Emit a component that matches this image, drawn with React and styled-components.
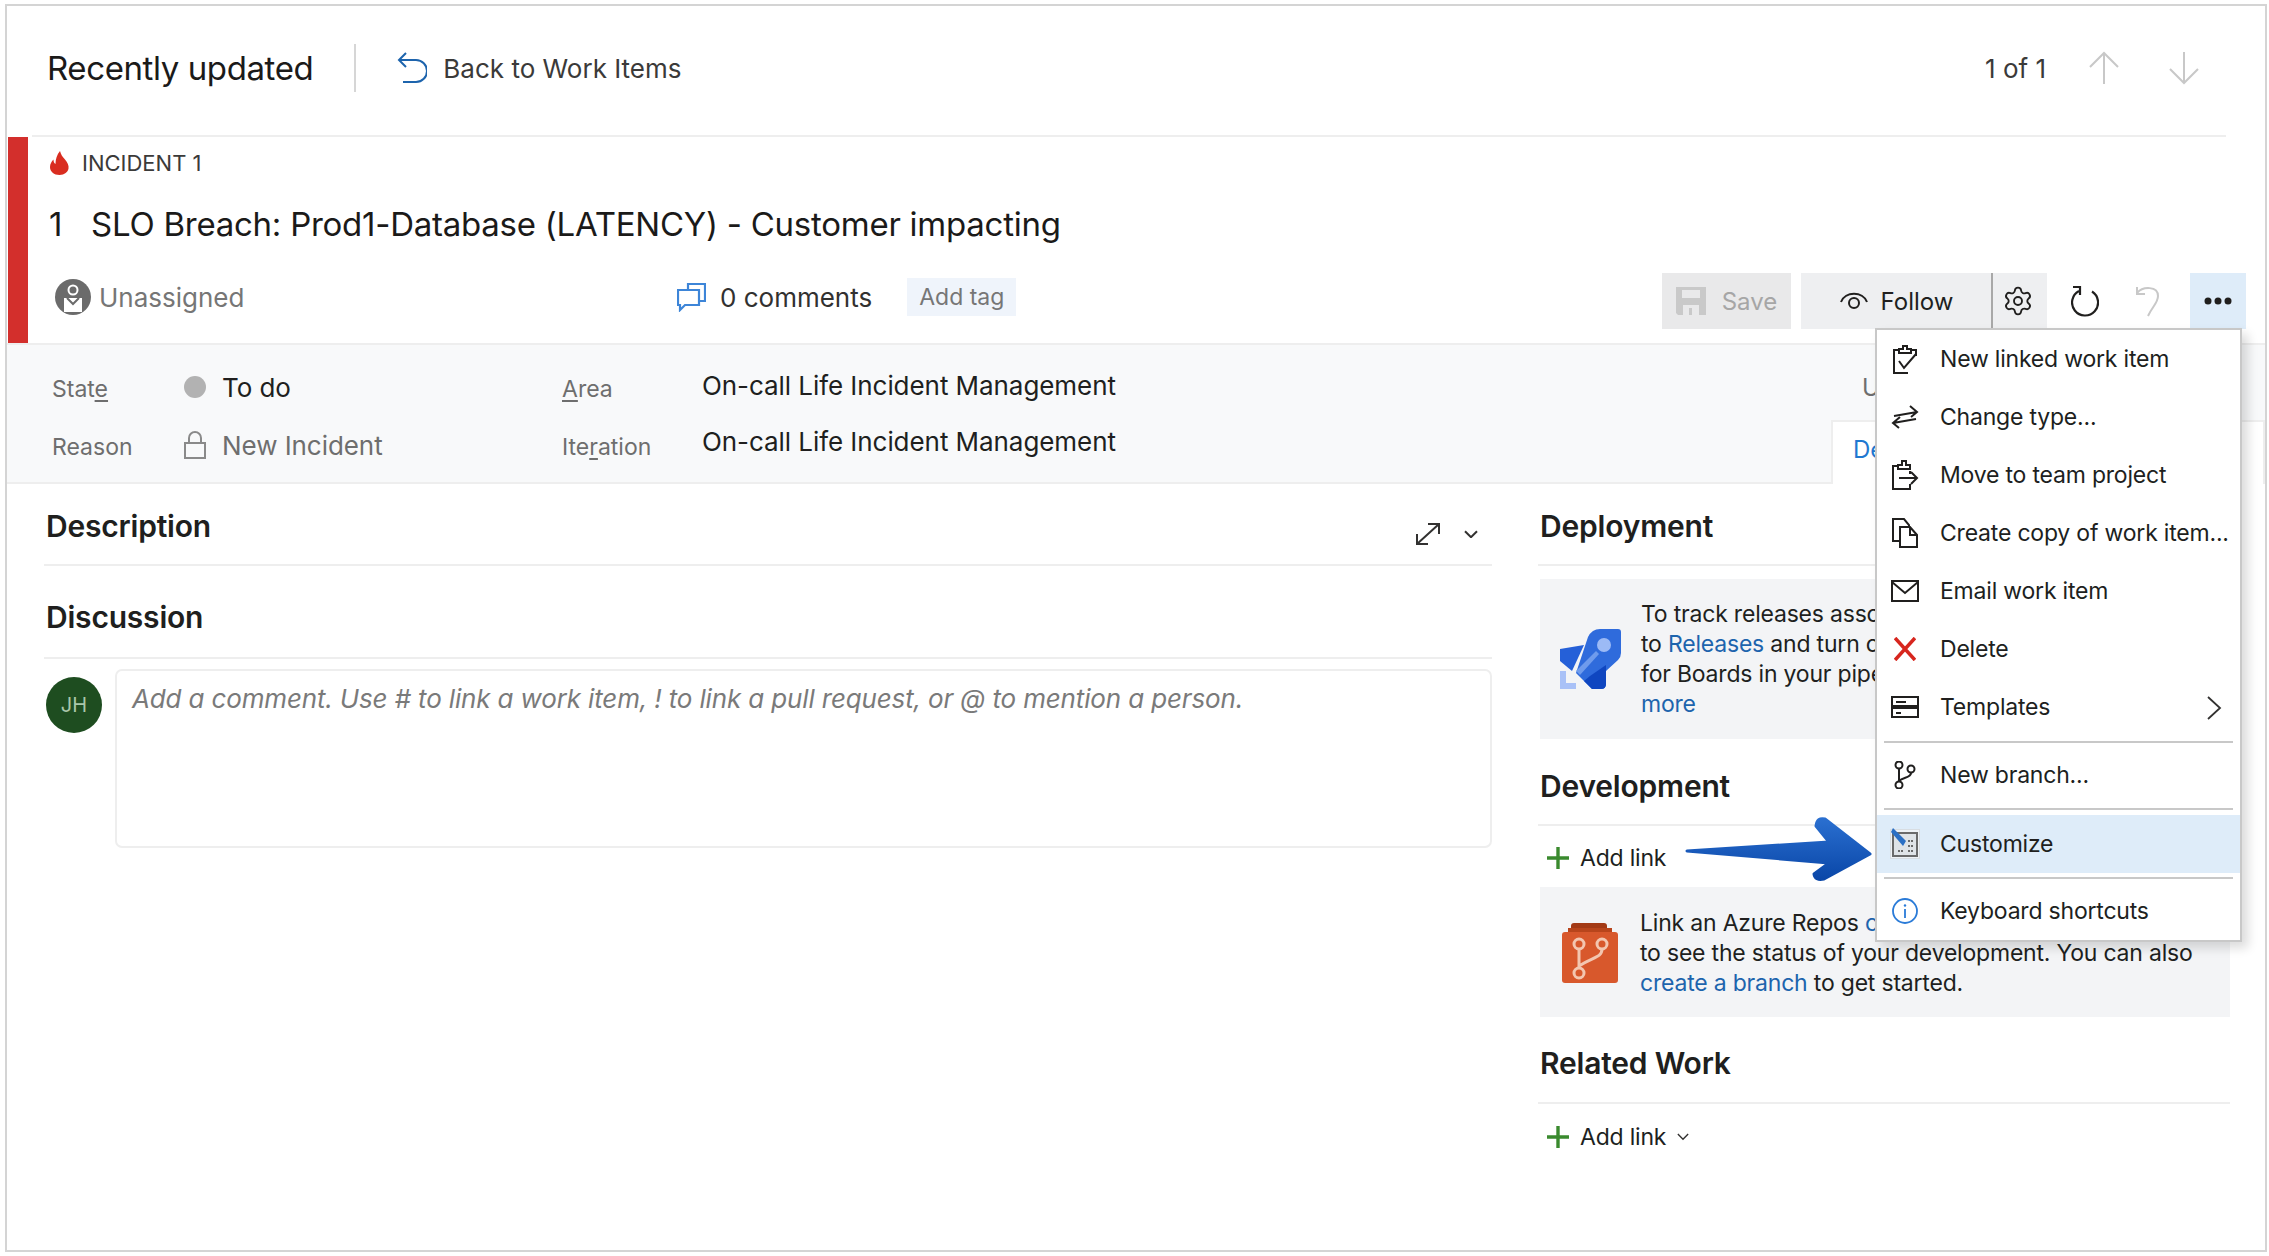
import React from "react";
import styled, { createGlobalStyle } from "styled-components";
import { Settings } from "lucide-react";

const GlobalStyle = createGlobalStyle`
  html, body {
    margin: 0;
    background: #fff;
  }
  * {
    box-sizing: border-box;
  }
`;

const Frame = styled.div`
  position: relative;
  width: 2262px;
  height: 1248px;
  margin: 4px 0 0 5px;
  border: 2px solid #d4d4d4;
  background: #fff;
  font-family: Inter, "Liberation Sans", sans-serif;
  color: #201f1e;
  overflow: hidden;
`;

const Header = styled.div`
  display: flex;
  align-items: center;
  height: 131px;
  margin: 0 39px 0 25px;
  padding: 0 26px 5px 15px;
  border-bottom: 2px solid #eeeeee;
`;

const HeaderTitle = styled.div`
  font-size: 33px;
  letter-spacing: -0.4px;
  color: #1b1a19;
`;

const VDivider = styled.div`
  width: 2px;
  height: 48px;
  margin: 0 41px;
  background: #d6d6d6;
`;

const BackLink = styled.div`
  display: flex;
  align-items: center;
  gap: 16px;
  font-size: 26px;
  color: #3b3a39;
`;

const Pager = styled.div`
  display: flex;
  align-items: center;
  margin-left: auto;
  font-size: 26px;
  color: #3b3a39;
`;

const PagerArrow = styled.svg`
  width: 32px;
  height: 34px;
  margin-left: ${(p) => p.$gap}px;
  fill: none;
  stroke: #c8c8c8;
  stroke-width: 2;
`;

const Incident = styled.section`
  height: 206px;
  margin-left: 1px;
  border-left: 20px solid #d32f2c;
  padding: 0 19px 14px 21px;
`;

const TypeRow = styled.div`
  display: flex;
  align-items: center;
  gap: 13px;
  height: 52px;
  padding-left: 1px;
  font-size: 22px;
  color: #3b3a39;
`;

const TitleRow = styled.div`
  display: flex;
  align-items: center;
  height: 70px;
  margin-bottom: 14px;
  font-size: 33px;
  letter-spacing: -0.25px;
  color: #1b1a19;
`;

const TitleId = styled.span`
  width: 42px;
`;

const MetaRow = styled.div`
  display: flex;
  align-items: center;
  height: 56px;
`;

const Meta = styled.div`
  display: flex;
  align-items: center;
  padding-bottom: 8px;
`;

const Assignee = styled(Meta)`
  width: 622px;
  margin-left: 6px;
  gap: 8px;
  font-size: 26px;
  color: #767676;
`;

const Comments = styled(Meta)`
  gap: 14px;
  font-size: 26px;
  color: #323130;
`;

const Tag = styled.div`
  display: flex;
  align-items: center;
  height: 38px;
  margin-left: 35px;
  padding: 0 12px;
  background: #eff4fb;
  font-size: 23px;
  color: #767676;
`;

const Toolbar = styled.div`
  display: flex;
  align-items: stretch;
  height: 56px;
  margin-left: auto;
`;

const ToolButton = styled.div`
  display: flex;
  align-items: center;
  justify-content: center;
  gap: ${(p) => p.$gap || 0}px;
  width: ${(p) => p.$w}px;
  margin-left: ${(p) => p.$ml || 0}px;
  background: ${(p) => p.$bg || "transparent"};
  border-right: ${(p) => (p.$split ? "2px solid #a8a8a8" : "0")};
  font-size: 24px;
  color: ${(p) => p.$color || "#201f1e"};
`;

const GearIcon = styled(Settings)`
  margin-right: 4px;
`;

const DetailsBar = styled.section`
  display: flex;
  height: 141px;
  background: #f8f9fa;
  border-top: 2px solid #eeeeee;
  border-bottom: 2px solid #eeeeee;
`;

const FieldGrid = styled.div`
  display: grid;
  grid-template-columns: 132px 378px 140px 1fr;
  grid-template-rows: 58px 58px;
  align-items: center;
  padding: 13px 0 0 45px;
`;

const FieldLabel = styled.div`
  font-size: 23px;
  color: #6e6e6e;
  padding-top: 3px;
  u {
    text-underline-offset: 3px;
  }
`;

const FieldValue = styled.div`
  display: flex;
  align-items: center;
  gap: 16px;
  font-size: 26px;
  letter-spacing: -0.06px;
  color: ${(p) => (p.$muted ? "#6e6e6e" : "#201f1e")};
  margin-top: ${(p) => p.$up || 0}px;
`;

const StateDot = styled.span`
  width: 22px;
  height: 22px;
  border-radius: 50%;
  background: #b2b2b2;
`;

const TabSide = styled.div`
  display: flex;
  flex-direction: column;
  justify-content: space-between;
  width: 434px;
  margin-left: auto;
`;

const Updated = styled.div`
  margin: 28px 0 0 31px;
  font-size: 24px;
  color: #6e6e6e;
`;

const Tab = styled.div`
  height: 64px;
  margin-bottom: -2px;
  padding: 13px 0 0 20px;
  background: #fff;
  border: 2px solid #eeeeee;
  border-bottom: 0;
  font-size: 24px;
  color: #1f78d1;
`;

const Body = styled.div`
  display: grid;
  grid-template-columns: 1448px 692px;
  column-gap: 46px;
  padding: 0 35px 0 37px;
`;

const Column = styled.div`
  display: flex;
  flex-direction: column;
`;

const SectionHead = styled.div`
  display: flex;
  align-items: center;
  height: 40px;
  box-sizing: content-box;
  margin-top: ${(p) => p.$top}px;
  padding: 0 0 ${(p) => p.$bottom}px 2px;
  border-bottom: 2px solid #eeeeee;
  font-size: 30px;
  font-weight: 600;
  letter-spacing: -0.2px;
  color: #201f1e;
`;

const HeadTools = styled.div`
  display: flex;
  align-items: center;
  gap: 22px;
  margin: 16px 14px 0 auto;
`;

const CommentRow = styled.div`
  display: flex;
  align-items: flex-start;
  gap: 13px;
  margin-top: 10px;
  padding-left: 2px;
`;

const Avatar = styled.div`
  display: flex;
  align-items: center;
  justify-content: center;
  width: 56px;
  height: 56px;
  margin-top: 8px;
  border-radius: 50%;
  background: #1e4d20;
  font-size: 20px;
  color: #a9c6aa;
`;

const CommentBox = styled.div`
  flex: 1;
  height: 179px;
  padding: 12px 15px;
  border: 2px solid #eeeeee;
  border-radius: 7px;
  font-size: 26px;
  font-style: italic;
  letter-spacing: -0.15px;
  color: #7a7a7a;
`;

const InfoBox = styled.div`
  display: flex;
  align-items: center;
  gap: ${(p) => p.$gap}px;
  height: ${(p) => p.$h}px;
  margin: ${(p) => p.$top || 0}px 0 0 2px;
  padding-left: ${(p) => p.$left}px;
  padding-top: ${(p) => p.$pt || 0}px;
  background: #f3f4f6;
  font-size: 23px;
  letter-spacing: -0.2px;
  line-height: 30px;
  white-space: nowrap;
  color: #201f1e;
  overflow: hidden;
`;

const InfoLink = styled.span`
  color: #1d64ad;
`;

const AddLink = styled.div`
  display: flex;
  align-items: center;
  gap: 11px;
  height: ${(p) => p.$h}px;
  padding: ${(p) => p.$pt || 0}px 0 0 9px;
  font-size: 23px;
  letter-spacing: -0.2px;
  color: #201f1e;
`;

const Menu = styled.div`
  position: absolute;
  top: 322px;
  right: 23px;
  width: 367px;
  border: 2px solid #c8c8c8;
  background: #fff;
  box-shadow: 6px 6px 10px rgba(0, 0, 0, 0.14);
  font-size: 23px;
  letter-spacing: -0.2px;
  color: #201f1e;
`;

const MenuItem = styled.div`
  display: flex;
  align-items: center;
  height: ${(p) => p.$h || 58}px;
  padding-left: 13px;
  white-space: nowrap;
  background: ${(p) => (p.$active ? "#deecf9" : "transparent")};
`;

const MenuIcon = styled.div`
  display: flex;
  align-items: center;
  justify-content: center;
  flex: none;
  width: 30px;
  height: 32px;
  margin-right: 20px;
`;

const MenuChevron = styled.svg`
  width: 16px;
  height: 24px;
  margin: 2px 18px 0 auto;
  fill: none;
  stroke: #323130;
  stroke-width: 1.8;
`;

const MenuSep = styled.div`
  height: 2px;
  margin: ${(p) => p.$top}px 7px ${(p) => p.$bottom}px;
  background: #c8c8c8;
`;

const Pointer = styled.svg`
  position: absolute;
  left: 1677px;
  top: 808px;
  width: 192px;
  height: 68px;
`;

const Ic = styled.svg`
  flex: none;
  fill: none;
  stroke: ${(p) => p.$c || "#201f1e"};
  stroke-width: ${(p) => p.$sw || 2};
`;

const FlameIcon = () => (
  <svg width="19" height="24" viewBox="0 0 19 24">
    <path
      fill="#d92d20"
      d="M10 0c1 4 2.500 5.500 5 8.500 2.500 3 4 6 3.500 9C18 21 14.500 24 9.500 24 4 24 0 20.500 0 16c0-3 1.500-5.500 3.500-7.500 0 2 .5 3.500 2 4.500C5.500 8 7 3.500 10 0z"
    />
  </svg>
);

const BackIcon = () => (
  <Ic $c="#1d64ad" width="30" height="32" viewBox="0 0 30 32">
    <path d="M2 8h17a8.500 8.500 0 0 1 0 22H6" />
    <path d="M9 1L2 8l7 7" />
  </Ic>
);

const PersonIcon = () => (
  <svg width="36" height="36" viewBox="0 0 36 36">
    <circle cx="18" cy="18" r="18" fill="#6b6b6b" />
    <circle cx="18" cy="11" r="4.500" fill="none" stroke="#fff" strokeWidth="2" />
    <path d="M9 33V19h18v14" fill="#fff" />
    <path d="M12 19l6 6 6-6" fill="none" stroke="#6b6b6b" strokeWidth="2" />
  </svg>
);

const CommentIcon = () => (
  <Ic $c="#3d85d8" $sw={2.2} width="29" height="29" viewBox="0 0 29 29">
    <path d="M11 7V1h17v17h-6" />
    <path d="M1 7h21v15H8l-5 5v-5H1z" />
  </Ic>
);

const SaveIcon = () => (
  <svg width="30" height="28" viewBox="0 0 30 28">
    <path
      fill="#c9c9c9"
      d="M0 0h30v28H23V18H7v10H2L0 26zM6 3v8h18V3zM13 21h3v7h-3z"
      fillRule="evenodd"
    />
  </svg>
);

const EyeIcon = () => (
  <Ic $sw={2} width="30" height="24" viewBox="0 0 30 24">
    <path d="M2 13C6 2 24 2 28 13" />
    <circle cx="15" cy="14" r="5" />
  </Ic>
);

const RefreshIcon = () => (
  <Ic $sw={2.2} width="28" height="32" viewBox="0 0 28 32">
    <path d="M8 6A13 13 0 1 0 21 6.500" />
    <path d="M2 2h7v8" />
  </Ic>
);

const UndoIcon = () => (
  <Ic $c="#c8c8c8" width="26" height="32" viewBox="0 0 26 32">
    <path d="M2 8C8 1 23 1 23 11c0 7-6 11-10 20" />
    <path d="M2 2v7h8" />
  </Ic>
);

const DotsIcon = () => (
  <svg width="28" height="8" viewBox="0 0 28 8">
    <circle cx="4" cy="4" r="3.500" fill="#201f1e" />
    <circle cx="14" cy="4" r="3.500" fill="#201f1e" />
    <circle cx="24" cy="4" r="3.500" fill="#201f1e" />
  </svg>
);

const LockIcon = () => (
  <Ic $c="#8a8a8a" width="22" height="28" viewBox="0 0 22 28">
    <rect x="1" y="12" width="20" height="15" />
    <path d="M5 12V7a6 6 0 0 1 12 0v5" />
  </Ic>
);

const ExpandIcon = () => (
  <Ic $c="#323130" width="28" height="26" viewBox="0 0 28 26">
    <path d="M3 23L25 3M14 3h11v10M3 13v10h11" />
  </Ic>
);

const SmallChevron = ({ w = 14, sw = 2 }) => (
  <Ic $c="#323130" $sw={sw} width={w} height={w * 0.6} viewBox="0 0 14 8">
    <path d="M1 1l6 6 6-6" />
  </Ic>
);

const PlusIcon = () => (
  <Ic $c="#3a8a2e" $sw={3.4} width="22" height="22" viewBox="0 0 22 22">
    <path d="M11 0v22M0 11h22" />
  </Ic>
);

const RocketIcon = () => (
  <svg width="61" height="60" viewBox="0 0 61 60">
    <path fill="#2560d8" d="M0 20l24-4-12 26L0 32z" />
    <path
      fill="#2f6bdc"
      d="M28 8Q32 0 40 0h18q3 0 3 3v21q0 4-3 7L46 42v13q0 5-5 5h-9L16 44z"
    />
    <path fill="#0f46c0" d="M30 47l16-11v19q0 5-5 5h-9l-8-8z" />
    <circle cx="44" cy="16" r="7" fill="#9cbaf5" />
    <path fill="#6f9bec" d="M16 42l20-20 3 3-19 21z" />
    <path fill="#a9c1f7" d="M0 42h6v12h10v6H0z" />
  </svg>
);

const RepoIcon = () => (
  <svg width="56" height="60" viewBox="0 0 56 60">
    <path fill="#a33a16" d="M12 0h30q3 0 3 3v4H9V3q0-3 3-3z" />
    <path fill="#b8451c" d="M6 5h44v6H6z" />
    <rect x="0" y="9" width="56" height="51" rx="3" fill="#d8582c" />
    <g fill="none" stroke="#f3c6b0" strokeWidth="3">
      <circle cx="17" cy="21" r="5" />
      <circle cx="40" cy="21" r="5" />
      <circle cx="17" cy="50" r="5" />
      <path d="M17 26v19M40 26c0 9-10 8-23 17" />
    </g>
  </svg>
);

const ClipboardCheckIcon = () => (
  <Ic width="26" height="30" viewBox="0 0 26 30">
    <path d="M7 6H2v23h14M19 6h5v6" />
    <path d="M7 9V5h4V2h4v3h4v4z" />
    <path d="M7 17l5 7 12-14" />
  </Ic>
);

const SwapIcon = () => (
  <Ic width="28" height="24" viewBox="0 0 28 24">
    <path d="M3 11L26 7M19 1l7 6-6 5" />
    <path d="M25 14L2 18M9 12l-7 6 6 5" />
  </Ic>
);

const ClipboardMoveIcon = () => (
  <Ic width="28" height="30" viewBox="0 0 28 30">
    <path d="M7 6H2v23h17v-5M19 6h-1M19 14v-3" />
    <path d="M7 9V5h4V1h4v4h4v4z" />
    <path d="M8 18h18M20 12l6 6-6 6" />
  </Ic>
);

const CopyIcon = () => (
  <Ic width="28" height="30" viewBox="0 0 28 30">
    <path d="M9 23H2V1h11l5 6v3" />
    <path d="M9 9h10l7 8v12H9zM19 9v8h7" />
  </Ic>
);

const MailIcon = () => (
  <Ic width="28" height="22" viewBox="0 0 28 22">
    <rect x="1" y="1" width="26" height="20" />
    <path d="M1 2l13 11L27 2" />
  </Ic>
);

const CrossIcon = () => (
  <Ic $c="#d7261e" $sw={3.6} width="22" height="24" viewBox="0 0 22 24">
    <path d="M1 1l20 22M21 1L1 23" />
  </Ic>
);

const TemplatesIcon = () => (
  <Ic width="28" height="22" viewBox="0 0 28 22">
    <rect x="1" y="1" width="26" height="9" />
    <rect x="1" y="12" width="26" height="9" />
    <path d="M5 6h10M5 17h5" />
  </Ic>
);

const BranchIcon = () => (
  <Ic width="22" height="28" viewBox="0 0 22 28">
    <circle cx="5" cy="4" r="3.500" />
    <circle cx="5" cy="24" r="3.500" />
    <circle cx="17" cy="8" r="3.500" />
    <path d="M5 8v12M17 12c0 5-8 4-12 8" />
  </Ic>
);

const CustomizeIcon = () => (
  <svg width="30" height="32" viewBox="0 0 30 32">
    <rect x="0.500" y="1.500" width="29" height="29" fill="#eef2f6" stroke="#d8dde2" />
    <rect x="3" y="5" width="24" height="23" fill="#dfe3e7" stroke="#6a6a6a" strokeWidth="2" />
    <path d="M18 13h6M18 18h6M18 23h6M8 23h6" stroke="#6a6a6a" strokeWidth="2" strokeDasharray="2 1" />
    <path d="M3 0l13 13-3 5L1 4z" fill="#2b6fc4" />
  </svg>
);

const InfoIcon = () => (
  <svg width="26" height="26" viewBox="0 0 26 26">
    <circle cx="13" cy="13" r="12" fill="none" stroke="#2a7bd8" strokeWidth="1.800" />
    <path d="M13 11v9" stroke="#2a7bd8" strokeWidth="1.800" />
    <circle cx="13" cy="7.500" r="1.200" fill="#2a7bd8" />
  </svg>
);

const App = () => (
  <Frame>
    <GlobalStyle />
    <Header>
      <HeaderTitle>Recently updated</HeaderTitle>
      <VDivider />
      <BackLink>
        <BackIcon />
        Back to Work Items
      </BackLink>
      <Pager>
        1 of 1
        <PagerArrow $gap={42} viewBox="0 0 32 34">
          <path d="M16 33V2M2 16L16 2l14 14" />
        </PagerArrow>
        <PagerArrow $gap={48} viewBox="0 0 32 34">
          <path d="M16 1v31M2 18l14 14 14-14" />
        </PagerArrow>
      </Pager>
    </Header>

    <Incident>
      <TypeRow>
        <FlameIcon />
        INCIDENT 1
      </TypeRow>
      <TitleRow>
        <TitleId>1</TitleId>
        SLO Breach: Prod1-Database (LATENCY) - Customer impacting
      </TitleRow>
      <MetaRow>
        <Assignee>
          <PersonIcon />
          Unassigned
        </Assignee>
        <Comments>
          <CommentIcon />
          0 comments
        </Comments>
        <Meta>
          <Tag>Add tag</Tag>
        </Meta>
        <Toolbar>
          <ToolButton $w={129} $bg="#e9e9ea" $gap={16} $color="#a6a6a6">
            <SaveIcon />
            Save
          </ToolButton>
          <ToolButton $w={192} $ml={10} $bg="#eeeff1" $gap={12} $split>
            <EyeIcon />
            Follow
          </ToolButton>
          <ToolButton $w={54} $bg="#eeeff1">
            <GearIcon size={32} strokeWidth={1.4} color="#201f1e" />
          </ToolButton>
          <ToolButton $w={76}>
            <RefreshIcon />
          </ToolButton>
          <ToolButton $w={50}>
            <UndoIcon />
          </ToolButton>
          <ToolButton $w={56} $ml={17} $bg="#deecf9">
            <DotsIcon />
          </ToolButton>
        </Toolbar>
      </MetaRow>
    </Incident>

    <DetailsBar>
      <FieldGrid>
        <FieldLabel>
          Stat<u>e</u>
        </FieldLabel>
        <FieldValue>
          <StateDot />
          To do
        </FieldValue>
        <FieldLabel>
          <u>A</u>rea
        </FieldLabel>
        <FieldValue $up={-4}>On-call Life Incident Management</FieldValue>
        <FieldLabel>Reason</FieldLabel>
        <FieldValue $muted>
          <LockIcon />
          New Incident
        </FieldValue>
        <FieldLabel>
          Ite<u>r</u>ation
        </FieldLabel>
        <FieldValue $up={-8}>On-call Life Incident Management</FieldValue>
      </FieldGrid>
      <TabSide>
        <Updated>Updated</Updated>
        <Tab>Details</Tab>
      </TabSide>
    </DetailsBar>

    <Body>
      <Column>
        <SectionHead $top={22} $bottom={18}>
          Description
          <HeadTools>
            <ExpandIcon />
            <SmallChevron />
          </HeadTools>
        </SectionHead>
        <SectionHead $top={31} $bottom={20}>
          Discussion
        </SectionHead>
        <CommentRow>
          <Avatar>JH</Avatar>
          <CommentBox>
            Add a comment. Use # to link a work item, ! to link a pull request, or @ to mention a person.
          </CommentBox>
        </CommentRow>
      </Column>

      <Column>
        <SectionHead $top={22} $bottom={18}>
          Deployment
        </SectionHead>
        <InfoBox $top={13} $h={160} $left={20} $gap={20}>
          <RocketIcon />
          <div>
            To track releases associated with this work item, go
            <br />
            to <InfoLink>Releases</InfoLink> and turn on deployment status reporting
            <br />
            for Boards in your pipeline. <InfoLink>Learn</InfoLink>
            <br />
            <InfoLink>more</InfoLink>
          </div>
        </InfoBox>
        <SectionHead $top={27} $bottom={18}>
          Development
        </SectionHead>
        <AddLink $h={61} $pt={2}>
          <PlusIcon />
          Add link
        </AddLink>
        <InfoBox $h={130} $left={22} $gap={22} $pt={2}>
          <RepoIcon />
          <div>
            Link an Azure Repos <InfoLink>commit, pull request, or branch</InfoLink>
            <br />
            to see the status of your development. You can also
            <br />
            <InfoLink>create a branch</InfoLink> to get started.
          </div>
        </InfoBox>
        <SectionHead $top={26} $bottom={19}>
          Related Work
        </SectionHead>
        <AddLink $h={66}>
          <PlusIcon />
          Add link
          <SmallChevron w={12} sw={1.6} />
        </AddLink>
      </Column>
    </Body>

    <Menu>
      <MenuItem>
        <MenuIcon><ClipboardCheckIcon /></MenuIcon>
        New linked work item
      </MenuItem>
      <MenuItem>
        <MenuIcon><SwapIcon /></MenuIcon>
        Change type...
      </MenuItem>
      <MenuItem>
        <MenuIcon><ClipboardMoveIcon /></MenuIcon>
        Move to team project
      </MenuItem>
      <MenuItem>
        <MenuIcon><CopyIcon /></MenuIcon>
        Create copy of work item...
      </MenuItem>
      <MenuItem>
        <MenuIcon><MailIcon /></MenuIcon>
        Email work item
      </MenuItem>
      <MenuItem>
        <MenuIcon><CrossIcon /></MenuIcon>
        Delete
      </MenuItem>
      <MenuItem>
        <MenuIcon><TemplatesIcon /></MenuIcon>
        Templates
        <MenuChevron viewBox="0 0 16 24">
          <path d="M2 1l12 11L2 23" />
        </MenuChevron>
      </MenuItem>
      <MenuSep $top={5} $bottom={4} />
      <MenuItem $h={56}>
        <MenuIcon><BranchIcon /></MenuIcon>
        New branch...
      </MenuItem>
      <MenuSep $top={5} $bottom={5} />
      <MenuItem $active>
        <MenuIcon><CustomizeIcon /></MenuIcon>
        Customize
      </MenuItem>
      <MenuSep $top={4} $bottom={3} />
      <MenuItem>
        <MenuIcon><InfoIcon /></MenuIcon>
        Keyboard shortcuts
      </MenuItem>
    </Menu>

    <Pointer viewBox="0 0 192 68">
      <defs>
        <linearGradient id="pointerFill" x1="0" y1="0" x2="0" y2="1">
          <stop offset="0" stopColor="#2a6fd0" />
          <stop offset="1" stopColor="#0a47a8" />
        </linearGradient>
      </defs>
      <path
        fill="url(#pointerFill)"
        stroke="url(#pointerFill)"
        strokeWidth="3"
        strokeLinejoin="round"
        d="M3 37L145 28 132 12Q133 3 141 5L186 40 140 65Q131 67 130 60L145 49z"
      />
    </Pointer>
  </Frame>
);

export default App;
